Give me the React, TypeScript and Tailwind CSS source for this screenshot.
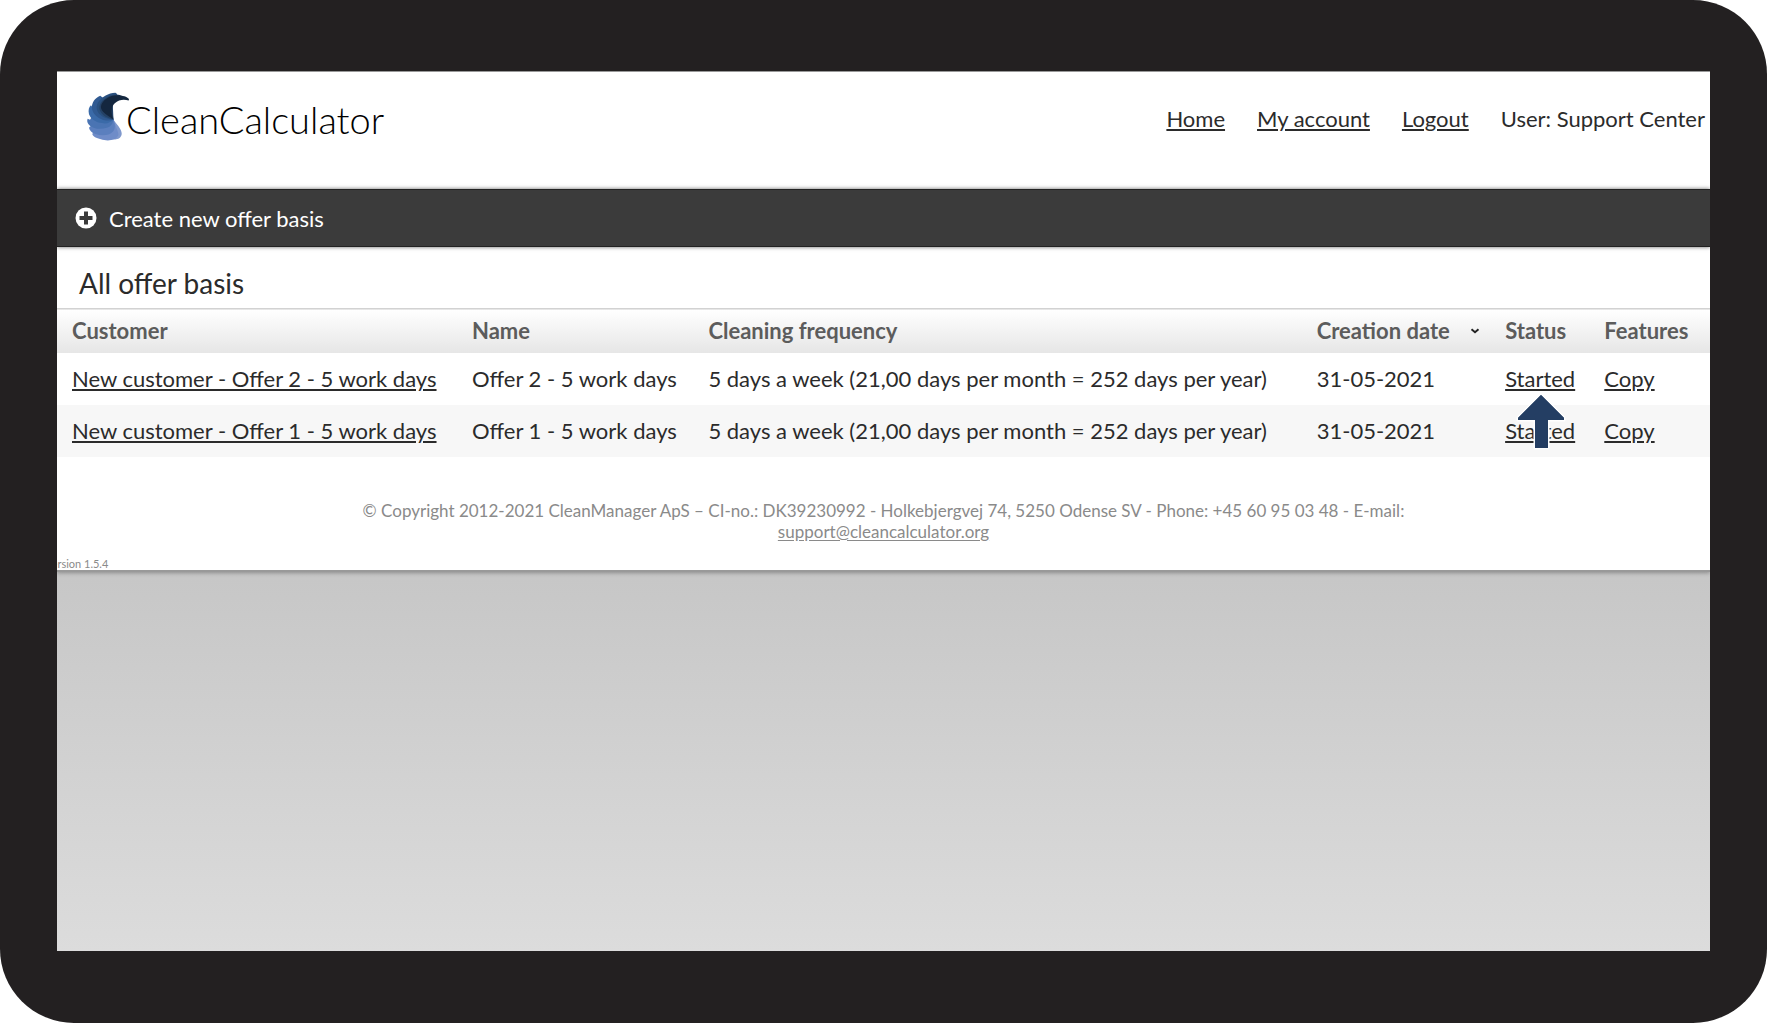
import React from 'react';

interface Offer {
  id: number;
  customer: string;
  name: string;
  frequency: string;
  created: string;
  status: string;
}

const offers: Offer[] = [
  {
    id: 2,
    customer: 'New customer - Offer 2 - 5 work days',
    name: 'Offer 2 - 5 work days',
    frequency: '5 days a week (21,00 days per month = 252 days per year)',
    created: '31-05-2021',
    status: 'Started',
  },
  {
    id: 1,
    customer: 'New customer - Offer 1 - 5 work days',
    name: 'Offer 1 - 5 work days',
    frequency: '5 days a week (21,00 days per month = 252 days per year)',
    created: '31-05-2021',
    status: 'Started',
  },
];

const LogoMark: React.FC = () => (
  <svg viewBox="20 20 130 148" className="h-[49px] w-[43px]" aria-hidden="true">
    <path fill="#8099cd" d="M100 103 C108 116 126 132 125 147 C122 163 108 165 96 162 L60 130 Z" />
    <path fill="#6f8cc8" d="M100 103 C106 124 115 138 115 150 C108 168 80 169 62 163 C48 159 38 155 36 147 L40 140 L54 112 Z" />
    <path fill="#5b7fbe" d="M100 103 C106 120 106 132 98 140 C88 152 64 153 46 147 C34 144 28 136 26 128 L32 122 Z" />
    <path fill="#4a74b3" d="M100 103 C98 116 92 125 80 128 C62 134 40 132 29 122 C21 114 19 107 22 101 L29 104 L42 84 Z" />
    <path fill="#3a6aa8" d="M100 103 C92 112 80 117 66 114 C46 112 32 102 26 87 C23 74 26 65 32 60 L37 67 L62 62 Z" />
    <path fill="#305a92" d="M100 103 C90 107 76 108 64 102 C46 94 36 82 35 68 C34 52 43 38 60 31 L65 35 L84 50 Z" />
    <path fill="#29507f" d="M100 103 C84 104 70 98 60 89 C47 77 46 60 56 48 C66 34 84 23 106 22 L112 27 L94 60 Z" />
    <path fill="#254266" d="M100 103 C82 100 68 92 61 80 C54 68 58 52 72 41 C86 31 102 26 122 30 L98 58 Z" />
    <path fill="#14273f" d="M100 103 C80 90 62 80 62 64 C66 44 88 30 112 30 C128 30 141 35 147 41 L146 46 C132 41 116 43 104 54 C92 66 92 84 100 103 Z" />
  </svg>
);

const SortIcon: React.FC = () => (
  <svg viewBox="0 0 10 6" className="h-[6px] w-[10px]" aria-hidden="true">
    <path d="M1.5 1.3 L5 4.2 L8.5 1.3" fill="none" stroke="#222" strokeWidth="2" />
  </svg>
);

const PointerArrow: React.FC = () => (
  <svg viewBox="0 0 50 57" className="absolute left-[26px] top-[40px] z-10 h-[57px] w-[50px]" aria-hidden="true">
    <path
      d="M25 2 L48 25 V27 H32 V55 H19 V27 H2 V25 Z"
      fill="#243e63"
      stroke="#fff"
      strokeWidth="3"
      strokeLinejoin="round"
      paintOrder="stroke"
    />
    <path d="M25 2.5 L47.5 25 V26 H31 V54 H19.500 V26 H2.500 V25 Z" fill="#243e63" stroke="#243e63" strokeLinejoin="round" />
  </svg>
);

const Header: React.FC = () => (
  <header className="flex h-[118px] items-start justify-between border-t border-[#999] bg-white pl-[30px] pr-[5px] pt-[20px]">
    <a href="#" className="flex text-black">
      <LogoMark />
      <span className="-ml-1 pt-[5px] text-[38px] leading-[44px] font-light">CleanCalculator</span>
    </a>
    <nav className="flex gap-8 pt-[13px] leading-[28px]">
      <a href="#" className="underline underline-offset-2">Home</a>
      <a href="#" className="underline underline-offset-2">My account</a>
      <a href="#" className="underline underline-offset-2">Logout</a>
      <span>User: Support Center</span>
    </nav>
  </header>
);

const Toolbar: React.FC = () => (
  <div className="relative flex h-[58px] items-center border-y border-[#222] bg-[#3b3b3b] pl-[18px] shadow-[0_0_4px_rgba(0,0,0,0.6)]">
    <button type="button" className="flex items-center gap-3 text-white">
      <svg viewBox="0 0 22 22" className="h-[22px] w-[22px]" aria-hidden="true">
        <circle cx="11" cy="11" r="10.500" fill="#fff" />
        <path d="M11 4.500 V17.500 M4.500 11 H17.500" stroke="#3b3b3b" strokeWidth="4" />
      </svg>
      Create new offer basis
    </button>
  </div>
);

const OfferTable: React.FC = () => (
  <table className="w-full table-fixed border-collapse text-left whitespace-nowrap">
    <colgroup>
      <col className="w-[24.2%]" />
      <col className="w-[14.3%]" />
      <col className="w-[36.8%]" />
      <col className="w-[11.4%]" />
      <col className="w-[6%]" />
      <col />
    </colgroup>
    <thead>
      <tr className="h-[44px] border-t border-[#d2d2d2] bg-linear-to-b from-white to-[#e6e6e6] text-[#5c5c5c]">
        <th className="pl-[15px]">Customer</th>
        <th className="pl-[15px]">Name</th>
        <th className="pl-[15px]">Cleaning frequency</th>
        <th className="pl-[15px]">
          <button type="button" className="flex items-center gap-5 font-bold">
            Creation date
            <SortIcon />
          </button>
        </th>
        <th className="pl-[15px]">Status</th>
        <th className="pl-[15px]">Features</th>
      </tr>
    </thead>
    <tbody>
      {offers.map((offer, index) => (
        <tr key={offer.id} className="h-[52px] even:bg-[#f7f7f7]">
          <td className="pl-[15px]">
            <a href="#" className="underline underline-offset-2">{offer.customer}</a>
          </td>
          <td className="pl-[15px]">{offer.name}</td>
          <td className="pl-[15px]">{offer.frequency}</td>
          <td className="pl-[15px]">{offer.created}</td>
          <td className="relative pl-[15px]">
            <a href="#" className="underline underline-offset-2">{offer.status}</a>
            {index === 0 && <PointerArrow />}
          </td>
          <td className="pl-[15px]">
            <a href="#" className="underline underline-offset-2">Copy</a>
          </td>
        </tr>
      ))}
    </tbody>
  </table>
);

const Footer: React.FC = () => (
  <footer className="text-[#8a8a8a]">
    <p className="mx-auto max-w-[1200px] pt-[43px] text-center text-[17px] leading-[21px]">
      © Copyright 2012-2021 CleanManager ApS – CI-no.: DK39230992 - Holkebjergvej 74, 5250 Odense SV - Phone: +45 60 95 03 48 - E-mail:{' '}
      <br />
      <a href="#" className="underline underline-offset-2">support@cleancalculator.org</a>
    </p>
    <p className="-ml-[12px] pt-[16px] text-[11px] leading-[12px]">Version 1.5.4</p>
  </footer>
);

export default function App() {
  return (
    <div className="bg-white">
      <div className="flex min-h-screen flex-col rounded-[74px] bg-[#232021] px-[57px] pt-[71px] pb-[72px] font-['Lato',sans-serif] text-[22px] text-[#2b2b2b]">
        <div className="flex-1 overflow-hidden bg-linear-to-b from-[#ababab] to-[#dcdcdc]">
          <main className="border-b-2 border-[#999] bg-white shadow-[0_1px_4px_rgba(0,0,0,0.3)]">
            <Header />
            <Toolbar />
            <h1 className="pt-[20px] pb-[9px] pl-[22px] text-[28px] leading-[32px]">All offer basis</h1>
            <OfferTable />
            <Footer />
          </main>
        </div>
      </div>
    </div>
  );
}
